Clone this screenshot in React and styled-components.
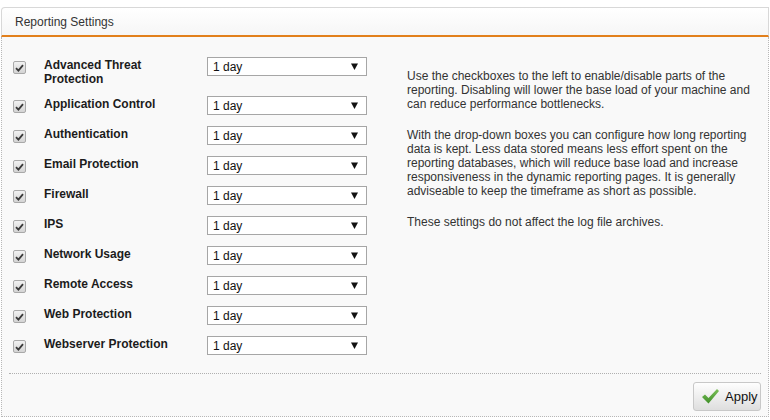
import React from "react";
import styled, { createGlobalStyle } from "styled-components";

const GlobalStyle = createGlobalStyle`
  body {
    margin: 0;
    background: #ffffff;
    font-family: "Liberation Sans", Arial, sans-serif;
    font-size: 12px;
    color: #222;
  }
`;

const Page = styled.div`
  padding: 7px 1px 0 1px;
`;

const Panel = styled.div`
  width: 768px;
`;

const Header = styled.div`
  height: 27px;
  display: flex;
  align-items: center;
  padding-left: 13px;
  border: 1px solid #d8d8d8;
  border-bottom: 2px solid #e2801c;
  border-top-left-radius: 4px;
  background: linear-gradient(#ffffff, #f6f6f6);
  color: #333;
  font-size: 12px;
`;

const Body = styled.div`
  background: #f9f9f9;
  border: 1px dotted #b8b8b8;
  border-top: none;
  padding-top: 20px;
`;

const Form = styled.div`
  display: flex;
  align-items: flex-start;
  padding-left: 11px;
`;

const Rows = styled.div`
  display: flex;
  flex-direction: column;
`;

const Row = styled.div`
  display: flex;
  align-items: flex-start;
  min-height: 20px;
  margin-bottom: 10px;
`;

const Check = styled.span`
  width: 11px;
  height: 11px;
  margin-top: 4px;
  margin-right: 18px;
  border: 1px solid #a9a9a9;
  border-radius: 2px;
  background: linear-gradient(#f2f2f2, #d4d4d4);
  display: flex;
  align-items: center;
  justify-content: center;
`;

const Label = styled.div`
  width: 155px;
  margin-right: 8px;
  font-weight: bold;
  line-height: 14px;
  color: #1c1c1c;
  padding-top: 1px;
`;

const Select = styled.div`
  box-sizing: border-box;
  width: 160px;
  height: 19px;
  border: 1px solid #a6a6a6;
  background: #fff;
  display: flex;
  align-items: center;
  justify-content: space-between;
  padding: 0 8px 0 5px;
  font-size: 12px;
  color: #111;
`;

const Help = styled.div`
  width: 360px;
  margin-left: 40px;
  margin-top: 12px;
  color: #333;
  line-height: 14px;

  p {
    margin: 0 0 17px;
  }
`;

const Separator = styled.div`
  margin: 7px 7px 0;
  border-top: 1px dotted #b0b0b0;
`;

const Footer = styled.div`
  display: flex;
  justify-content: flex-end;
  padding: 8px 7px 5px;
`;

const Button = styled.button`
  box-sizing: border-box;
  width: 68px;
  height: 29px;
  display: flex;
  align-items: center;
  gap: 6px;
  padding: 0 0 0 8px;
  border: 1px solid #c8c8c8;
  border-radius: 3px;
  background: linear-gradient(#fefefe, #dedede);
  font-family: "Liberation Sans", Arial, sans-serif;
  font-size: 13px;
  color: #111;
`;

const sections = [
  "Advanced Threat Protection",
  "Application Control",
  "Authentication",
  "Email Protection",
  "Firewall",
  "IPS",
  "Network Usage",
  "Remote Access",
  "Web Protection",
  "Webserver Protection",
];

const Tick = () => (
  <svg width="9" height="8" viewBox="0 0 9 8">
    <path d="M1 4.2 L3.4 6.6 L8 1.2" fill="none" stroke="#3a3a3a" strokeWidth="1.8" />
  </svg>
);

const Arrow = () => (
  <svg width="7" height="7" viewBox="0 0 7 7">
    <polygon points="0,0.5 7,0.5 3.5,7" fill="#111" />
  </svg>
);

const GreenCheck = () => (
  <svg width="17" height="15" viewBox="0 0 17 15">
    <defs>
      <linearGradient id="gc" x1="0" y1="0" x2="0" y2="1">
        <stop offset="0" stopColor="#7cc05a" />
        <stop offset="1" stopColor="#3f8f28" />
      </linearGradient>
    </defs>
    <polygon points="0,8 3,5.5 6.5,9 15,0 17,2 6.5,14.5" fill="url(#gc)" />
  </svg>
);

export default function App() {
  return (
    <Page>
      <GlobalStyle />
      <Panel>
        <Header>Reporting Settings</Header>
        <Body>
          <Form>
            <Rows>
              {sections.map((name) => (
                <Row key={name}>
                  <Check>
                    <Tick />
                  </Check>
                  <Label>{name}</Label>
                  <Select>
                    <span>1 day</span>
                    <Arrow />
                  </Select>
                </Row>
              ))}
            </Rows>
            <Help>
              <p>
                Use the checkboxes to the left to enable/disable parts of the
                reporting. Disabling will lower the base load of your machine
                and can reduce performance bottlenecks.
              </p>
              <p>
                With the drop-down boxes you can configure how long reporting
                data is kept. Less data stored means less effort spent on the
                reporting databases, which will reduce base load and increase
                responsiveness in the dynamic reporting pages. It is generally
                adviseable to keep the timeframe as short as possible.
              </p>
              <p>These settings do not affect the log file archives.</p>
            </Help>
          </Form>
          <Separator />
          <Footer>
            <Button>
              <GreenCheck />
              Apply
            </Button>
          </Footer>
        </Body>
      </Panel>
    </Page>
  );
}
